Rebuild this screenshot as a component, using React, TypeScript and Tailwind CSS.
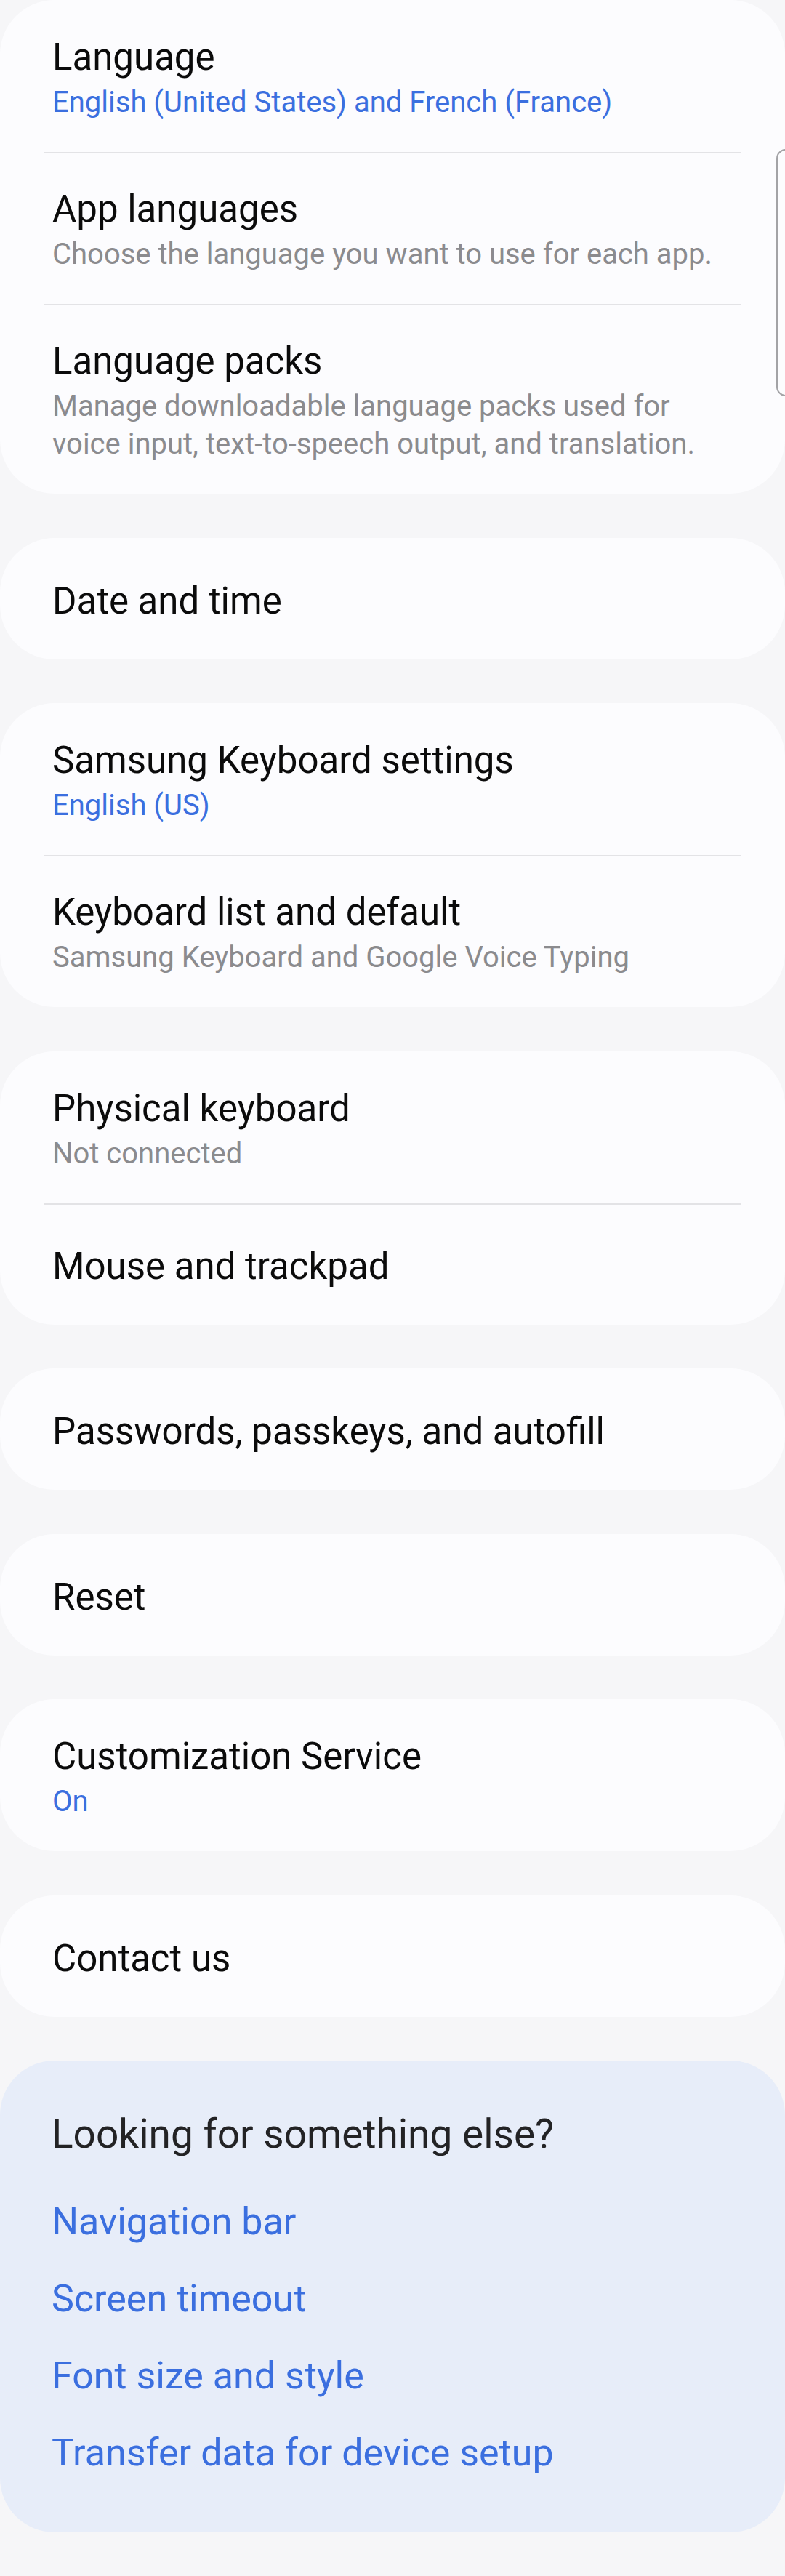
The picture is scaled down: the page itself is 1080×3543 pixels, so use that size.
import React from "react";

type Item = { title: string; sub?: string; blue?: boolean };

const groups: Item[][] = [
  [
    { title: "Language", sub: "English (United States) and French (France)", blue: true },
    { title: "App languages", sub: "Choose the language you want to use for each app." },
    {
      title: "Language packs",
      sub: "Manage downloadable language packs used for\nvoice input, text-to-speech output, and translation.",
    },
  ],
  [{ title: "Date and time" }],
  [
    { title: "Samsung Keyboard settings", sub: "English (US)", blue: true },
    { title: "Keyboard list and default", sub: "Samsung Keyboard and Google Voice Typing" },
  ],
  [{ title: "Physical keyboard", sub: "Not connected" }, { title: "Mouse and trackpad" }],
  [{ title: "Passwords, passkeys, and autofill" }],
  [{ title: "Reset" }],
  [{ title: "Customization Service", sub: "On", blue: true }],
  [{ title: "Contact us" }],
];

const related = ["Navigation bar", "Screen timeout", "Font size and style", "Transfer data for device setup"];

function Row({ item, first }: { item: Item; first: boolean }) {
  if (!item.sub) {
    return (
      <div className={first ? "px-[12px] pt-[58px] pb-[51px]" : "border-t-2 border-[#e3e3e6] px-[12px] pt-[56px] pb-[51px]"}>
        <div className="text-[51px] leading-[58px] text-[#0b0b0b]">{item.title}</div>
      </div>
    );
  }
  return (
    <div className={first ? "px-[12px] pt-[50px] pb-[42px]" : "border-t-2 border-[#e3e3e6] px-[12px] pt-[48px] pb-[42px]"}>
      <div className="text-[51px] leading-[58px] text-[#0b0b0b]">{item.title}</div>
      <div
        className={
          item.blue
            ? "mt-[7px] whitespace-pre-line text-[40px] leading-[52px] text-[#3b6fdf]"
            : "mt-[7px] whitespace-pre-line text-[40px] leading-[52px] text-[#8b8b8e]"
        }
      >
        {item.sub}
      </div>
    </div>
  );
}

export default function App() {
  return (
    <div
      className="relative min-h-[3543px] w-[1080px] overflow-hidden bg-[#f6f6f8]"
      style={{ fontFamily: "Roboto, 'Noto Sans', sans-serif" }}
    >
      <div className="flex flex-col gap-[60.5px]">
        {groups.map((group, gi) => (
          <div key={gi} className="rounded-[75px] bg-[#fcfcfe] px-[60px]">
            {group.map((item, i) => (
              <Row key={item.title} item={item} first={i === 0} />
            ))}
          </div>
        ))}

        {/* related settings card */}
        <div className="rounded-[75px] bg-[#e7edf9] px-[71px] pt-[69px] pb-[80px]">
          <div className="text-[55px] leading-[64px] text-[#232325]">Looking for something else?</div>
          <div className="mt-[60px] flex flex-col gap-[48px]">
            {related.map((r) => (
              <div key={r} className="text-[52px] leading-[58px] text-[#3b6fdf]">
                {r}
              </div>
            ))}
          </div>
        </div>
      </div>

      {/* scroll indicator */}
      <div className="absolute right-[-14px] top-[205px] h-[340px] w-[26px] rounded-[14px] border-2 border-[#a3a3a6]" />
    </div>
  );
}
